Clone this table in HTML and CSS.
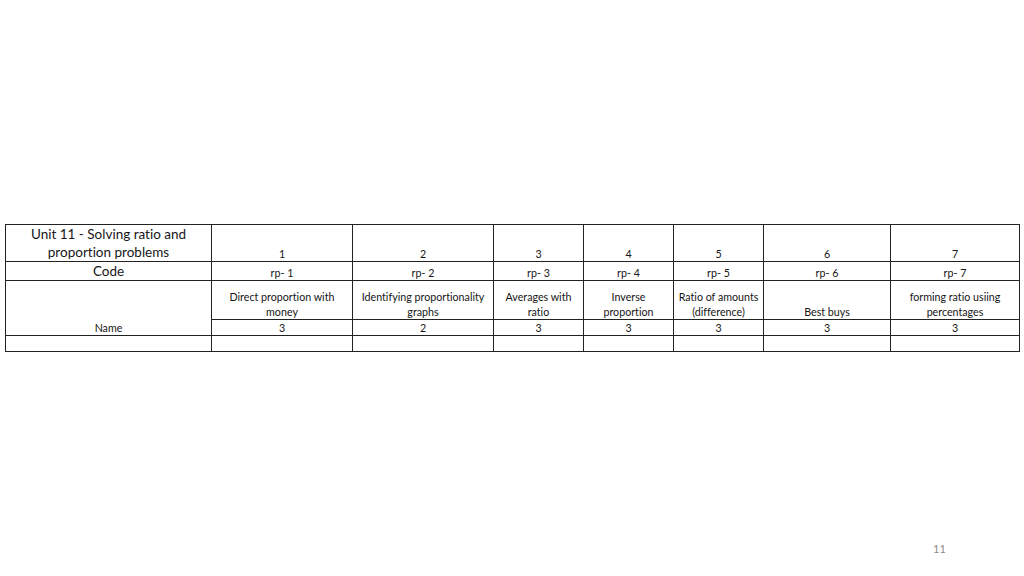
FILE: index.html
```html
<!DOCTYPE html>
<html>
<head>
<meta charset="utf-8">
<link rel="stylesheet" href="styles.css">
</head>
<body>
<div class="slide">
  <table class="grid">
    <colgroup>
      <col class="c0"><col class="c1"><col class="c2"><col class="c3"><col class="c4"><col class="c5"><col class="c6"><col class="c7">
    </colgroup>
    <tr class="r-head">
      <td class="title">Unit 11 - Solving ratio and<br>proportion problems</td>
      <td>1</td><td>2</td><td>3</td><td>4</td><td>5</td><td>6</td><td>7</td>
    </tr>
    <tr class="r-code">
      <td class="title">Code</td>
      <td>rp- 1</td><td>rp- 2</td><td>rp- 3</td><td>rp- 4</td><td>rp- 5</td><td>rp- 6</td><td>rp- 7</td>
    </tr>
    <tr class="r-desc">
      <td rowspan="2">Name</td>
      <td>Direct proportion with<br>money</td>
      <td>Identifying proportionality<br>graphs</td>
      <td>Averages with<br>ratio</td>
      <td>Inverse<br>proportion</td>
      <td>Ratio of amounts<br>(difference)</td>
      <td>Best buys</td>
      <td>forming ratio usiing<br>percentages</td>
    </tr>
    <tr class="r-num">
      <td>3</td><td>2</td><td>3</td><td>3</td><td>3</td><td>3</td><td>3</td>
    </tr>
    <tr class="r-empty">
      <td></td><td></td><td></td><td></td><td></td><td></td><td></td><td></td>
    </tr>
  </table>
  <div class="pageno">11</div>
</div>
</body>
</html>
```
FILE: styles.css
```css
html, body {
  margin: 0;
  padding: 0;
  background: #ffffff;
}
.slide {
  width: 1024px;
  height: 576px;
  box-sizing: border-box;
  padding: 224px 0 0 5px;
  font-family: Lato, "Open Sans", "Liberation Sans", sans-serif;
  font-variant-ligatures: none;
  color: #161616;
}
.grid {
  border-collapse: collapse;
  table-layout: fixed;
  width: 1014px;
}
.c0 { width: 206px; }
.c1 { width: 141px; }
.c2 { width: 141px; }
.c3 { width: 90px; }
.c4 { width: 90px; }
.c5 { width: 90px; }
.c6 { width: 127px; }
.c7 { width: 129px; }
.grid td {
  border: 1px solid #222;
  padding: 0;
  text-align: center;
  vertical-align: bottom;
  font-size: 10.7px;
  line-height: 15px;
  white-space: nowrap;
  overflow: hidden;
}
.grid td.title {
  font-size: 13.5px;
  line-height: 18px;
}
.r-head td { height: 36px; }
.r-code td { height: 17.5px; }
.r-desc td { height: 38px; }
.r-num td { height: 15px; }
.r-empty td { height: 15px; }
.pageno {
  margin: 190px 0 0 928px;
  font-size: 11px;
  color: #8a8a8a;
}
```
